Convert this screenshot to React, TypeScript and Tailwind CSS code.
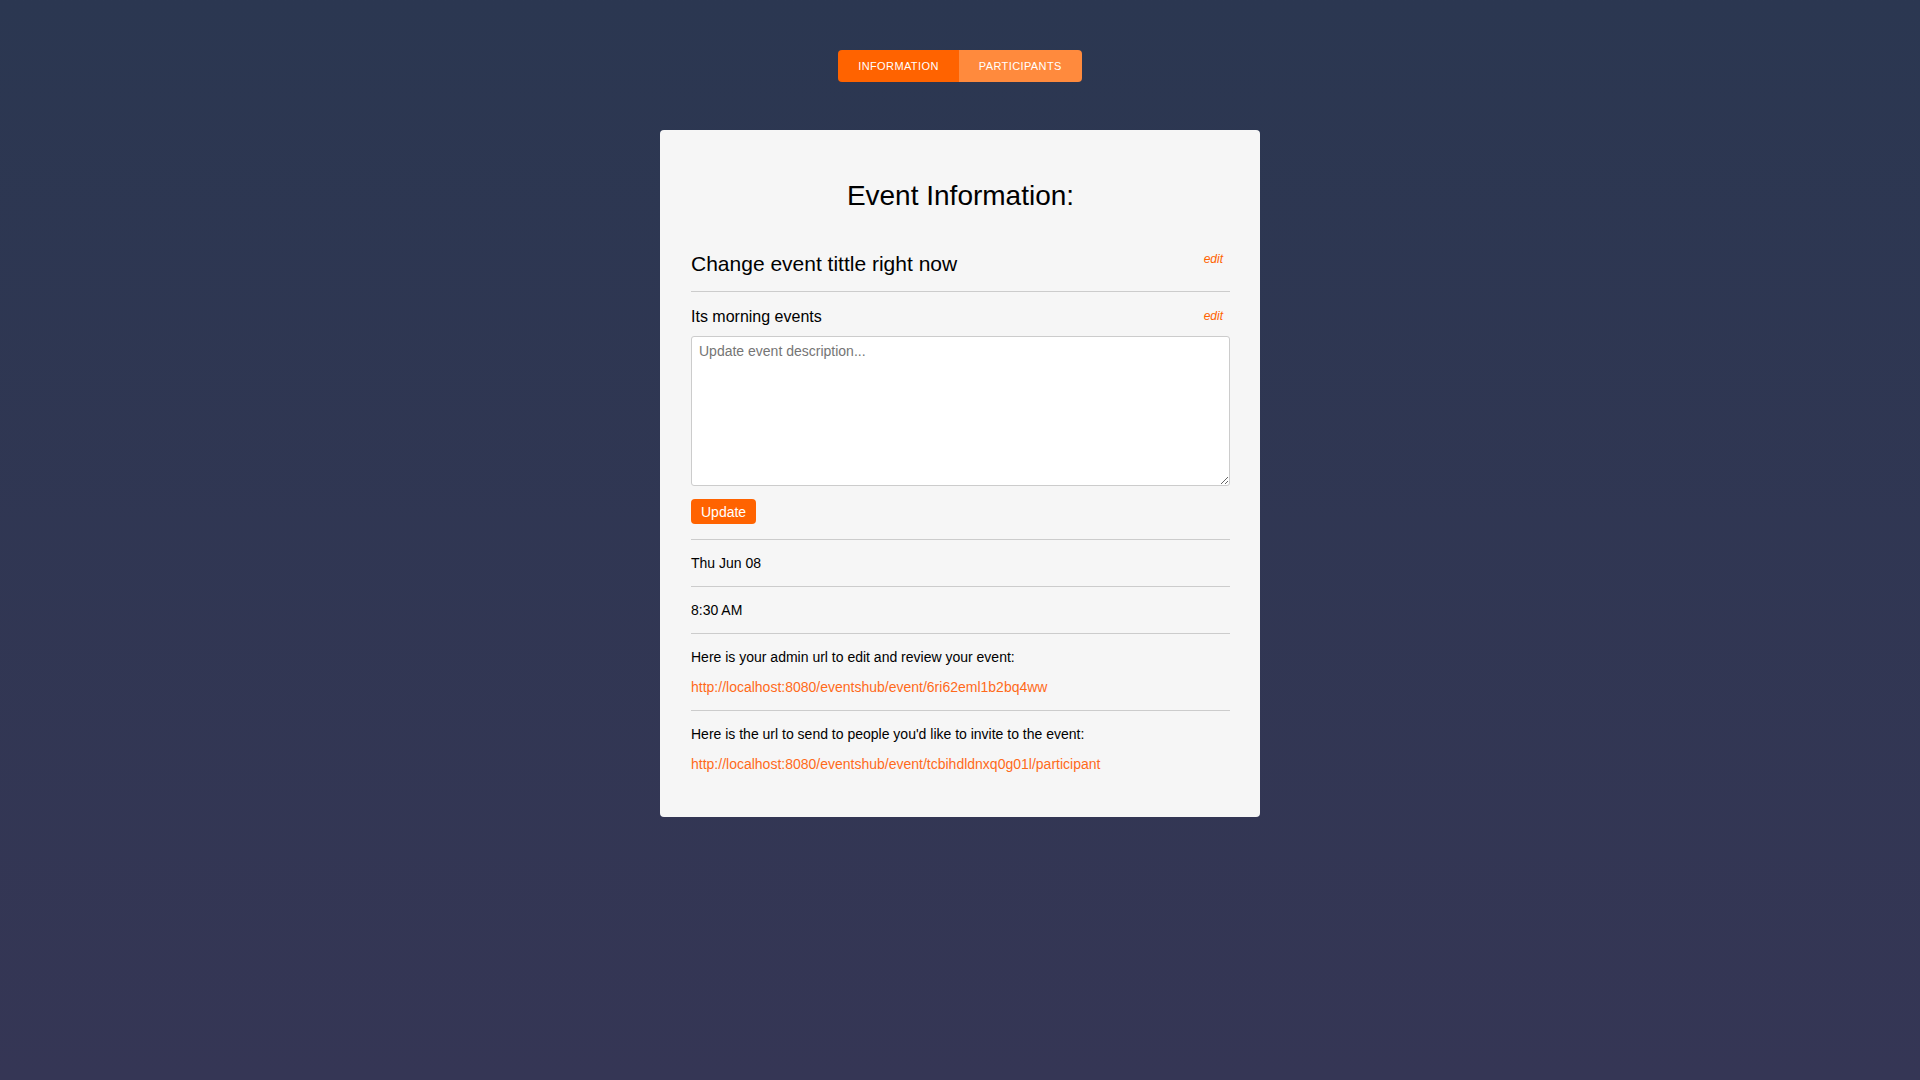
import React from 'react';

const font = { fontFamily: '"Liberation Sans", Arial, sans-serif' };

const Divider = () => <div className="h-px bg-[#cccccc]" />;

export default function App() {
  return (
    <div
      className="min-h-screen w-full bg-linear-to-b from-[#2b3751] to-[#353655] flex flex-col items-center pt-[50px]"
      style={font}
    >
      {/* Tabs */}
      <div className="flex rounded-[4px] overflow-hidden">
        <button className="h-[32px] px-5 bg-[#ff6300] text-white text-[11px] tracking-[0.4px] uppercase">
          Information
        </button>
        <button className="h-[32px] px-5 bg-[#ff8a3d] text-white text-[11px] tracking-[0.4px] uppercase">
          Participants
        </button>
      </div>

      {/* Card */}
      <div className="mt-[48px] w-[600px] bg-[#f6f6f6] rounded-[4px] pl-[31px] pr-[30px] pt-[50px] pb-[30px] text-black">
        <h1 className="text-center text-[28px] leading-[32px]">Event Information:</h1>

        <div className="mt-[40px] flex items-start justify-between pb-[15px]">
          <h2 className="text-[21px] leading-[24px]">Change event tittle right now</h2>
          <button className="mr-[7px] text-[12px] leading-[14px] italic text-[#ff6300]">edit</button>
        </div>
        <Divider />

        <div className="pt-[16px] flex items-start justify-between">
          <p className="text-[16px] leading-[18px]">Its morning events</p>
          <button className="mr-[7px] mt-[1px] text-[12px] leading-[14px] italic text-[#ff6300]">edit</button>
        </div>
        <textarea
          className="mt-[10px] block w-full h-[150px] rounded-[3px] border border-[#cccccc] bg-white px-[7px] py-[6px] text-[14px] leading-[16px] text-black placeholder:text-[#757575] outline-none"
          placeholder="Update event description..."
        />
        <button className="mt-[13px] mb-[15px] h-[25px] px-[10px] rounded-[4px] bg-[#ff6300] text-white text-[14px] leading-[16px]">
          Update
        </button>
        <Divider />

        <p className="py-[15px] text-[14px] leading-[16px]">Thu Jun 08</p>
        <Divider />
        <p className="py-[15px] text-[14px] leading-[16px]">8:30 AM</p>
        <Divider />

        <div className="py-[15px] text-[14px] leading-[16px] flex flex-col gap-[14px]">
          <p>Here is your admin url to edit and review your event:</p>
          <a className="text-[#ff6a1a]">http://localhost:8080/eventshub/event/6ri62eml1b2bq4ww</a>
        </div>
        <Divider />
        <div className="py-[15px] text-[14px] leading-[16px] flex flex-col gap-[14px]">
          <p>Here is the url to send to people you'd like to invite to the event:</p>
          <a className="text-[#ff6a1a]">http://localhost:8080/eventshub/event/tcbihdldnxq0g01l/participant</a>
        </div>
      </div>
    </div>
  );
}
